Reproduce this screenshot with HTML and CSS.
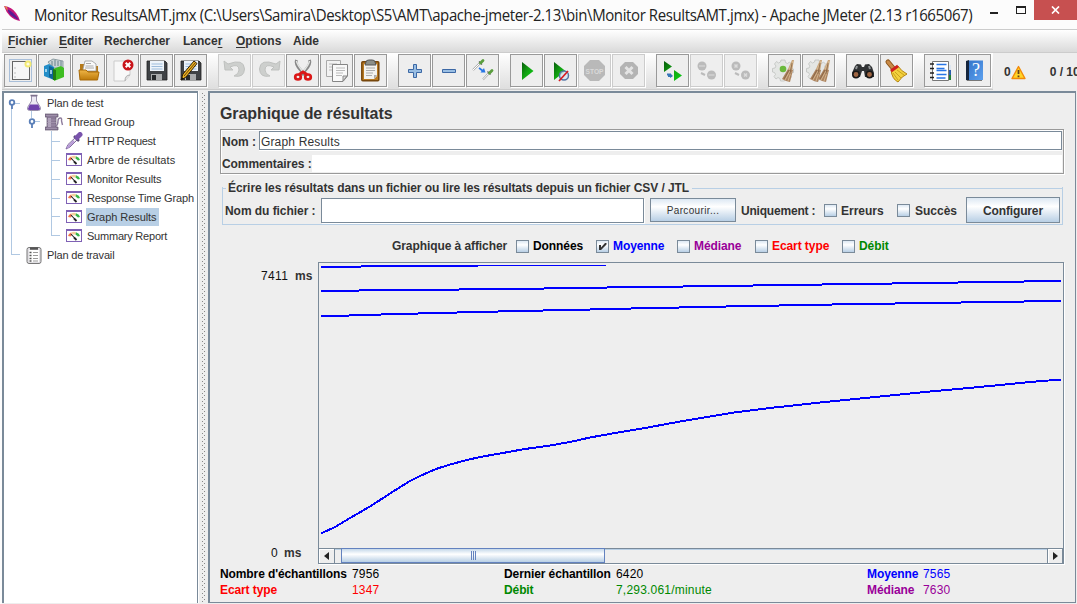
FILE: index.html
```html
<!DOCTYPE html>
<html lang="fr">
<head>
<meta charset="utf-8">
<title>Apache JMeter</title>
<link rel="stylesheet" href="styles.css">
</head>
<body>
<svg class="defs" width="0" height="0">
  <defs>
    <linearGradient id="play" x1="0" y1="0" x2="1" y2="1"><stop offset="0" stop-color="#075c0b"/><stop offset=".5" stop-color="#12a512"/><stop offset="1" stop-color="#0ad013"/></linearGradient>
    <linearGradient id="folder" x1="0" y1="0" x2="0" y2="1"><stop offset="0" stop-color="#efb546"/><stop offset="1" stop-color="#bd7a0a"/></linearGradient>
    <linearGradient id="blue" x1="0" y1="0" x2="1" y2="1"><stop offset="0" stop-color="#3675ca"/><stop offset="1" stop-color="#5ba0ee"/></linearGradient>
    <g id="gauge">
      <path d="M0 0H16V13H0Z M1 2V12H15V2Z" fill="#7f61b5" fill-rule="evenodd"/>
      <path d="M1 2H15V12H1Z" fill="#fff"/>
      <path d="M2 7 Q2.500 4.500 5 3.500 L6 6 L4.500 7.500Z" fill="#f3734c"/>
      <path d="M5 3.500 Q8 2.200 10 3.200 L9.500 5.500 H7Z" fill="#f5cf9a"/>
      <path d="M10 3.200 Q13.500 4.500 14 7 L12 7.500 L9.500 5.500Z" fill="#38b54a"/>
      <path d="M5 5 L10 10.500" stroke="#222" stroke-width="1.100"/><path d="M8 8.500L10.500 11" stroke="#222" stroke-width="1.800"/>
    </g>
    <g id="disk">
      <path d="M6 6 H24 L26 8 V25 H6Z" fill="#3f4245" stroke="#222" stroke-width=".8"/>
      <rect x="9" y="6" width="14" height="10" fill="#eef4fa"/>
      <path d="M10.5 9 H21.5 M10.5 11.5 H21.5 M10.5 14 H21.5" stroke="#9dbcdb"/>
      <rect x="10" y="19" width="11" height="6.5" fill="#a9abac"/><rect x="11" y="20" width="4" height="5" fill="#25282a"/>
    </g>
    <g id="gear">
      <path d="M10 5 h4 l.5 2.500 2 1 2-1.500 2.500 2.500-1.500 2 1 2 2 .5 v3.500 l-2.500.5-1 2 1.500 2-2.500 2.500-2-1.500-2 1-.5 2h-4l-.5-2.500-2-1-2 1.500-2-2.500 1.500-2-1-2-2-.5v-3.500l2.500-.5 1-2-1.500-2 2-2.500 2 1.500 2-1z" fill="#e4e6e4" stroke="#bfc1bf" stroke-width=".8"/>
    </g>
    <g id="brush"><path d="M10 0 L6 9 L10 11 L12 0Z" fill="#c9a57a"/><path d="M6 9 L0 19 L4 21 L8 22 L11 10Z" fill="#ad8460"/><path d="M8 11 L3 20 M9 12 L6 21 M11 1 L7 10" stroke="#dcbf98" stroke-width=".8"/><path d="M7 10 L2 19 M10 3L8 14" stroke="#7d5b3d" stroke-width=".7"/></g>
  </defs>
</svg>

<header class="titlebar">
  <svg class="feather" width="18" height="18" viewBox="0 0 18 18"><path d="M1 1 Q9 2 13 8 Q16 12 17 16 Q11 15 7 11 Q3 7 1 1Z" fill="#c5157b"/><path d="M4 4 Q11 7 16 15 Q9 12 6 8Z" fill="#5a1a94"/><path d="M1 1 L4 2 L5 6Z" fill="#e58c3c"/></svg>
  <div class="captionbox"><span class="caption">Monitor ResultsAMT.jmx (C:\Users\Samira\Desktop\S5\AMT\apache-jmeter-2.13\bin\Monitor ResultsAMT.jmx) - Apache JMeter (2.13 r1665067)</span></div>
  <span class="winbuttons">
    <svg width="44" height="20" viewBox="990 0 44 20" shape-rendering="crispEdges"><path d="M990 12 h8 v2 h-8z" fill="#222"/><path d="M1016 6 h10 v8 h-10z M1017 8 v5 h8 v-5z" fill="#222" fill-rule="evenodd"/></svg>
    <span class="close"><svg width="9" height="8" viewBox="0 0 9 8"><path d="M1 .5 L8 7.5 M8 .5 L1 7.5" stroke="#fff" stroke-width="1.7"/></svg></span>
  </span>
</header>

<div class="frame">
<nav class="menubar">
  <span class="m1"><u>F</u>ichier</span><span class="m2"><u>E</u>diter</span><span class="m3">Rechercher</span><span class="m4">Lance<u>r</u></span><span class="m5"><u>O</u>ptions</span><span class="m6">Aide</span>
</nav>

<div class="toolbar">
  <div class="tools">
    <div class="group">
      <button><svg viewBox="0 0 31 31"><rect x="4.5" y="4.5" width="22" height="22" fill="none" stroke="#a9bfd9"/><rect x="7.5" y="6.5" width="17" height="18" fill="#f7f7f7" stroke="#666"/><path d="M9.5 13h1M9.500 18h1M9.500 22h1" stroke="#888"/><circle cx="23" cy="9" r="3.500" fill="#f3ea72"/><circle cx="23" cy="9" r="1.600" fill="#fffce0"/></svg></button>
      <button><svg viewBox="0 0 31 31"><path d="M9 7 L14 4 L24 6 V13 L14 13Z" fill="#c9d3d5" stroke="#798c92" stroke-width=".8"/><path d="M13 6v5M16 5v6M19 6v5M22 6v5" stroke="#68828b"/><path d="M5 11 L10 9 L15 12 V25 L5 21Z" fill="#238ec8"/><path d="M10 11 L15 13 V25 L10 22Z" fill="#0f6498"/><path d="M14 14 L22 11 L25 13 V22 L15 26Z" fill="#3ebd21"/><path d="M14 14 L17 15 V25 L14 25Z" fill="#207b14"/><path d="M7 14v3M12 15v4" stroke="#c8eafb" stroke-width="1.5"/></svg></button>
      <button><svg viewBox="0 0 31 31"><path d="M7 13 V9 H12 L15 11 H25 V18 H7Z" fill="#b67a19"/><path d="M10 14 L12 6 H19 L23 9 V16 H10Z" fill="#fafafa" stroke="#999" stroke-width=".8"/><path d="M13 8.500h5M12.500 11h8M12 13h9" stroke="#aaa"/><path d="M6 15 H13 L15 17 H26 L24.500 25 H7Z" fill="url(#folder)" stroke="#a86b0b"/></svg></button>
      <button><svg viewBox="0 0 31 31"><path d="M7 6 H23 V20 L18 26 H7Z" fill="#f8f8f8" stroke="#ccc"/><path d="M23 20 Q18 20 18 26" fill="#e2e2e2" stroke="#aaa"/><circle cx="21" cy="10" r="5.500" fill="#c9141a"/><path d="M18.700 7.700l4.600 4.600m0-4.600l-4.600 4.600" stroke="#fff" stroke-width="2"/></svg></button>
      <button><svg viewBox="0 0 31 31"><use href="#disk"/></svg></button>
      <button><svg viewBox="0 0 31 31"><use href="#disk"/><path d="M6 25 L8 19 L19 6 L22 8.500 L11 22Z" fill="#ebb323" stroke="#312006"/><path d="M9 21 L20.500 7.500" stroke="#6e4308"/><path d="M6 25 L7 22 L9 24Z" fill="#111"/></svg></button>
    </div>
    <div class="group">
      <button class="off"><svg viewBox="0 0 31 31"><path d="M5 6 L6 15 H14 L11 12 Q20 8 20 15 Q20 19 15 21 Q25 23 25.500 14 Q25 3 9 9Z" fill="#cdcfcd" stroke="#bfc1bf"/></svg></button>
      <button class="off"><svg viewBox="0 0 31 31"><path d="M27 6 L26 15 H18 L21 12 Q12 8 12 15 Q12 19 17 21 Q7 23 6.500 14 Q7 3 23 9Z" fill="#cdcfcd" stroke="#bfc1bf"/></svg></button>
      <button><svg viewBox="0 0 31 31"><path d="M9.500 5 Q8 9 13.500 15 L18 20 M22.500 5 Q24 9 18.500 15 L14 20" fill="none" stroke="#888" stroke-width="3"/><path d="M9.500 6 Q10 10 17 18 M22.500 6 Q22 10 15 18" fill="none" stroke="#e3e5e3" stroke-width="1.500"/><ellipse cx="11" cy="22" rx="2.800" ry="2.500" fill="none" stroke="#db1717" stroke-width="2.700"/><ellipse cx="21" cy="22" rx="2.800" ry="2.500" fill="none" stroke="#db1717" stroke-width="2.700"/><path d="M12 19.500 L16 17 L20 19.500" stroke="#db1717" stroke-width="3" fill="none"/></svg></button>
      <button><svg viewBox="0 0 31 31"><path d="M5.500 5.500 H19.500 V21.500 H5.500Z" fill="#f2f2f2" stroke="#aaa"/><path d="M8 9h8M8 12h4M8 15h4" stroke="#bbb"/><path d="M11.500 9.500 H26.500 V21 L22 26.500 H11.500Z" fill="#f9f9f9" stroke="#858585"/><path d="M15 13h9M15 15.500h9M15 18h7M15 20.500h6" stroke="#bbb"/><path d="M26 21h-4v5z" fill="#ddd" stroke="#888"/></svg></button>
      <button><svg viewBox="0 0 31 31"><rect x="6.800" y="6.800" width="17" height="19" rx="1" fill="#b97a22" stroke="#76470d" stroke-width="1.500"/><path d="M9 9 H22 V21 L19 24 H9Z" fill="#f2f2ef"/><path d="M11 7 Q11 5 14 5 H17 Q20 5 20 7 L21 10 H10Z" fill="#8c8f89" stroke="#555"/><path d="M11 13h9M11 15.500h9M11 18h7M11 20.500h6" stroke="#aaa"/><path d="M22 20h-3v4z" fill="#aaa"/></svg></button>
    </div>
    <div class="group">
      <button><svg viewBox="0 0 31 31"><path d="M14.500 9.500h3v5h5v3h-5v5h-3v-5h-5v-3h5z" fill="#99bee3" stroke="#3c68a5"/></svg></button>
      <button><svg viewBox="0 0 31 31"><path d="M9.500 14.500h13v3h-13z" fill="#99bee3" stroke="#3c68a5"/></svg></button>
      <button><svg viewBox="0 0 31 31"><path d="M6 15 L13 8 M16 24.500 L22 18" stroke="#aaa" stroke-width="2"/><path d="M6 15 L13 8 M16 24.500 L22 18" stroke="#fff"/><path d="M12 6.500 L15 9.500 M20.500 16.500 L23.500 19.500" stroke="#555" stroke-width="1.200"/><path d="M13.500 8 L16 5.500 M22.500 18 L25 15.500" stroke="#5a9e3e" stroke-width="2.800" stroke-linecap="round"/><path d="M12 13 L16 16" stroke="#2976e5" stroke-width="1.600"/><path d="M18.500 17.500 L13.500 17.500 L17 13Z" fill="#2976e5"/></svg></button>
    </div>
    <div class="group">
      <button><svg viewBox="0 0 31 31"><path d="M11 7 L22.500 16 L11 25Z" fill="url(#play)"/></svg></button>
      <button><svg viewBox="0 0 31 31"><path d="M9 7 L20.500 16 L9 25Z" fill="url(#play)"/><circle cx="19" cy="20.500" r="4.500" fill="#d5e4f2" fill-opacity=".8" stroke="#5475a4" stroke-width="1.500"/><path d="M14 26 L23 16" stroke="#d61d21" stroke-width="1.700"/></svg></button>
      <button class="off"><svg viewBox="0 0 31 31"><path d="M11 5h9l6 6v9l-6 6h-9l-6-6v-9z" fill="#b9b9b9"/><text x="15.500" y="19" class="stoptext" textLength="18" lengthAdjust="spacingAndGlyphs">STOP</text></svg></button>
      <button class="off"><svg viewBox="0 0 31 31"><path d="M12 7h8l5 5v7l-5 5h-8l-5-5v-7z" fill="#b4b4b4"/><path d="M12.500 12l7 7m0-7l-7 7" stroke="#e4e4e4" stroke-width="3"/></svg></button>
    </div>
    <div class="group">
      <button><svg viewBox="0 0 31 31"><path d="M7 6 L15 11.500 L7 17Z M17 15 L25 20.500 L17 26Z" fill="url(#play)"/><path d="M10 19.500h2v1.500h3" stroke="#3776b8" stroke-width="2" fill="none"/><path d="M13 18l3 3-3 2z" fill="#3776b8"/></svg></button>
      <button class="off"><svg viewBox="0 0 31 31"><circle cx="11" cy="11" r="4.500" fill="#bbb"/><circle cx="20.500" cy="20" r="4.500" fill="#bbb"/><path d="M8 11h6M17.500 20h6" stroke="#ccc" stroke-width="2"/><path d="M10 18 L14 20" stroke="#bbb" stroke-width="2"/></svg></button>
      <button class="off"><svg viewBox="0 0 31 31"><circle cx="11" cy="11" r="4.500" fill="#bbb"/><circle cx="20.500" cy="20" r="4.500" fill="#bbb"/><path d="M9.500 9.500l3 3m0-3l-3 3M19 18.500l3 3m0-3l-3 3" stroke="#ddd" stroke-width="1.500"/><path d="M10 18 L14 20" stroke="#bbb" stroke-width="2"/></svg></button>
    </div>
    <div class="group">
      <button><svg viewBox="0 0 31 31"><use href="#gear" x="2"/><circle cx="14" cy="14" r="3.300" fill="#6ab93c"/><use href="#brush" x="13" y="5"/></svg></button>
      <button><svg viewBox="0 0 31 31"><use href="#gear" x="2"/><use href="#brush" x="7" y="5"/><use href="#brush" x="15" y="5"/></svg></button>
    </div>
    <div class="group">
      <button><svg viewBox="0 0 31 31"><path d="M8 11 L10 9 L14 9.500 L15 12 H17 L18 9.500 L22 9 L25 12 L27 18 V22 H18 L17 16 H15 L13 22 H6 L5 18Z" fill="#303234"/><path d="M10 11 L9 14 M22 11 L23 14" stroke="#909395" stroke-width="2"/><circle cx="9" cy="19.500" r="3.200" fill="#9e6542" stroke="#171717" stroke-width="1.500"/><circle cx="22.500" cy="19.500" r="3.200" fill="#9e6542" stroke="#171717" stroke-width="1.500"/></svg></button>
      <button><svg viewBox="0 0 31 31"><path d="M7 7 L12 13" stroke="#8e571c" stroke-width="5" stroke-linecap="round"/><path d="M7 7 L12 13" stroke="#c98b48" stroke-width="3" stroke-linecap="round"/><path d="M10 15 L17 11 Q20 16 26 19 Q21 21 17 27 Q11 24 10 15Z" fill="#f3d13d" stroke="#b4830b"/><path d="M16 15 L23 20 M14 17 L20 23 M12 18 L17 25" stroke="#c9a21f"/><path d="M10 16 L17 11" stroke="#d1201e" stroke-width="3"/></svg></button>
    </div>
    <div class="group">
      <button><svg viewBox="0 0 31 31"><path d="M7.500 6.500 H23.500 V25.500 H7.500Z" fill="#fff" stroke="#777"/><path d="M5 9h4M5 13.500h4M5 18h4M5 22.500h4" stroke="#222" stroke-width="1.500"/><path d="M11.500 9.500h10M11.500 13.500h8M11.500 15.500h10M11.500 19.500h10M11.500 23h9" stroke="#2876e6" stroke-width="1.300"/><path d="M25 10v5" stroke="#dce6f1" stroke-width="2"/><path d="M25 15v5" stroke="#2a5cad" stroke-width="2"/><path d="M25 20v5" stroke="#1f7f35" stroke-width="2"/></svg></button>
      <button><svg viewBox="0 0 31 31"><path d="M7 6 L10 5 V26 L7 25Z" fill="#16263e"/><path d="M10 5.500H24V25H10Z" fill="url(#blue)"/><path d="M8 25.500H23" stroke="#777" stroke-width="1"/><text x="17" y="21" class="help">?</text></svg></button>
    </div>
  </div>
  <div class="status">
    <span class="zero">0</span>
    <svg width="15" height="15" viewBox="0 0 15 15"><path d="M7.500 1.500 L14 13.500 H1Z" fill="#ffd426" stroke="#f28a09" stroke-width="1.400" stroke-linejoin="round"/><path d="M7.500 5v4M7.500 10.500v1.700" stroke="#65401c" stroke-width="1.800"/></svg>
    <span class="threads">0 / 10</span>
  </div>
</div>

<main class="split">
  <aside class="tree">
    <svg class="branches" width="60" height="165" viewBox="4 93 60 165" shape-rendering="crispEdges"><path d="M12 103.500H20M11.500 106V254.500H20M31.500 110V118M32 121.500H40M51.500 131V235.500H60M51 141.500H60M51 160.500H60M51 179.500H60M51 198.500H60M51 216.500H60" fill="none" stroke="#b0c8e2"/><g shape-rendering="auto" stroke="#5a7fb8" stroke-width="1.800" fill="#fff"><path d="M12 105V109M32 124V128"/><circle cx="12" cy="102.500" r="2.300"/><circle cx="32" cy="121.500" r="2.300"/></g></svg>
    <div class="node l0"><svg width="16" height="18" viewBox="0 0 16 18"><path d="M5.500 2V7L1.500 13.500Q1 16.500 3.500 16.500H12.500Q15 16.500 14.500 13.500L10.500 7V2Z" fill="#ece9f3" stroke="#9990ab"/><path d="M3.800 10.500H12.200L14 14.500Q14 16 12.500 16H3.500Q2 16 2 14.500Z" fill="#6f42ab"/><path d="M4.500 1.500H11.500" stroke="#7d718c" stroke-width="1.500"/></svg><span class="t1">Plan de test</span></div>
    <div class="node l1"><svg width="19" height="18" viewBox="0 0 19 18"><path d="M0 1h13v3h-2v10h2v3H0v-3h2V4H0z" fill="#8a7a97" stroke="#655971" stroke-width=".7"/><path d="M3 5v9h3V5z" fill="#b3a6be"/><path d="M2 7h9M2 9.500h9M2 12h9M1 2.500h11M1 15.500h11" stroke="#a799b2" stroke-width=".7"/><path d="M11 13 Q13 12 13 8 Q13 5 15.500 5 Q17 5 16.500 8 L17.500 12" fill="none" stroke="#8e7d9d" stroke-width="1.400"/></svg><span class="t2">Thread Group</span></div>
    <div class="node l2"><svg width="18" height="18" viewBox="0 0 18 18"><path d="M1 17 L3 12.500 L11 5 L13 7 L5 15Z" fill="#eee" stroke="#806a9e"/><path d="M2 16 L9 9" stroke="#b597d7" stroke-width="1.800"/><path d="M9 4 L14 9" stroke="#594b76" stroke-width="2.500"/><path d="M12 5.500 L15 2.500" stroke="#7953ac" stroke-width="5" stroke-linecap="round"/></svg><span class="t3">HTTP Request</span></div>
    <div class="node l2 g"><svg width="16" height="13"><use href="#gauge"/></svg><span class="t4">Arbre de résultats</span></div>
    <div class="node l2 g"><svg width="16" height="13"><use href="#gauge"/></svg><span class="t5">Monitor Results</span></div>
    <div class="node l2 g"><svg width="16" height="13"><use href="#gauge"/></svg><span class="t6">Response Time Graph</span></div>
    <div class="node l2 g"><svg width="16" height="13"><use href="#gauge"/></svg><span class="t7 selected">Graph Results</span></div>
    <div class="node l2 g"><svg width="16" height="13"><use href="#gauge"/></svg><span class="t8">Summary Report</span></div>
    <div class="node l0"><svg width="16" height="18" viewBox="0 0 16 18"><rect x="1" y="1.500" width="14" height="16" rx="2" fill="#e2e0e4" stroke="#777"/><rect x="3" y="4" width="10" height="12" fill="#fff"/><path d="M4 2.500h8" stroke="#555" stroke-width="2.500"/><path d="M3.500 6.500h2M3.500 9.500h2M3.500 12.500h2M3.500 15h2" stroke="#555" stroke-width="1.500"/><path d="M7 6.500h5M7 9.500h5M7 12.500h5M7 15h5" stroke="#9a9a9a"/></svg><span class="t9">Plan de travail</span></div>
  </aside>
  <div class="divider"><i></i><i></i></div>
  <section class="panel">
    <h1><span>Graphique de résultats</span></h1>
    <div class="namebox">
      <div class="namerow"><label>Nom :</label><div class="field"><span>Graph Results</span></div></div>
      <div class="comrow"><label>Commentaires :</label><div class="comfield"></div></div>
    </div>
    <div class="filebox">
      <div class="legend"><i class="stub"></i><span>Écrire les résultats dans un fichier ou lire les résultats depuis un fichier CSV / JTL</span><i class="rule"></i></div>
      <div class="filerow">
        <label class="fl">Nom du fichier :</label><div class="filefield"></div>
        <div class="btn browse"><span>Parcourir...</span></div>
        <label class="uniq">Uniquement :</label>
        <i class="cb"></i><label class="err">Erreurs</label>
        <i class="cb"></i><label class="suc">Succès</label>
        <div class="btn config"><span>Configurer</span></div>
      </div>
    </div>
    <div class="series">
      <label class="s0">Graphique à afficher</label>
      <i class="cb"></i><label class="s1">Données</label>
      <i class="cb"><svg width="11" height="11" viewBox="0 0 11 11"><path d="M2 4h2v2.500L8 2h1.500v1.500L4 9H2z" fill="#333"/></svg></i><label class="s2">Moyenne</label>
      <i class="cb"></i><label class="s3">Médiane</label>
      <i class="cb"></i><label class="s4">Ecart type</label>
      <i class="cb"></i><label class="s5">Débit</label>
    </div>
    <div class="graph">
      <div class="scale"><div><span class="num n1">7411</span><span class="ms">ms</span></div><div class="low"><span class="num n2">0</span><span class="ms">ms</span></div></div>
      <div class="plotbox">
        <svg class="plot" width="744" height="285" viewBox="319 263 744 285" shape-rendering="crispEdges" fill="none" stroke="#0000ff" stroke-width="2">
          <path d="M321 267H361M361 266H478"/><path d="M478 265.500H606" stroke-width="1"/>
          <path d="M321 291H359M359 290H459M459 289H544M544 288H607M607 287H683M683 286H753M753 285H822M822 284H892M892 283H958M958 282H1024M1024 281H1061"/>
          <path d="M321 316H349M349 315H381M381 314H418M418 313H457M457 312H498M498 311H543M543 310H590M590 309H631M631 308H679M679 307H726M726 306H779M779 305H832M832 304H895M895 303H961M961 302H1024M1024 301H1061"/>
          <polyline points="321,533.500 335,527 350,518 370,506.500 390,493.500 410,481 420,476 430,471.500 436,469 450,464.500 465,460.500 480,457 500,453.500 525,449 550,445.500 570,442 590,437.500 615,433 645,428 680,421.500 710,416.500 734,412.500 770,408 820,402.500 870,397.500 930,391.500 990,386 1030,382 1061,379.500"/>
        </svg>
        <div class="scroll">
          <div class="arrow"><svg width="5" height="8"><path d="M5 0v8L0 4z" fill="#222"/></svg></div>
          <div class="track"><div class="thumb"><i></i><i></i><i></i></div></div>
          <div class="arrow right"><svg width="5" height="8"><path d="M0 0v8l5-4z" fill="#222"/></svg></div>
        </div>
      </div>
    </div>
    <div class="stats">
      <b class="k1">Nombre d'échantillons</b><span>7956</span><b class="k2">Dernier échantillon</b><span>6420</span><b class="k3 blue">Moyenne</b><span class="blue">7565</span>
      <b class="k4 red">Ecart type</b><span class="red">1347</span><b class="k5 green">Débit</b><span class="green rate">7,293.061/minute</span><b class="k6 purple">Médiane</b><span class="purple">7630</span>
    </div>
  </section>
</main>
</div>
</body>
</html>
```
FILE: styles.css
```css
* { box-sizing: border-box; }
body { margin: 0; width: 1077px; height: 604px; overflow: hidden; background: #fcfcfc; color: #333; font: 12px/16px "Liberation Sans", Arial, sans-serif; }
svg { display: block; flex: none; }
.defs { position: absolute; }
label, b { font-weight: bold; }
label, span, b { white-space: nowrap; }
h1 { margin: 0; }

.titlebar { display: flex; height: 29px; padding-left: 3px; }
.feather { margin-top: 5px; }
.captionbox { margin-left: 13px; width: 956px; height: 29px; overflow: hidden; }
.caption { display: inline-block; font: 16px/30px "Open Sans", "Noto Sans", sans-serif; color: #222; letter-spacing: -.42px; transform: scaleX(.937); transform-origin: 0 0; }
.winbuttons { display: flex; }
.close { display: flex; align-items: center; justify-content: center; width: 43px; height: 20px; background: #c75050; }

.frame { margin-left: 2px; background: #eee; height: 575px; border-top: 1px solid #ccc; }
.menubar { display: flex; height: 23px; padding-left: 6px; line-height: 22px; font-weight: bold; background: linear-gradient(#fff, #dadada); border-bottom: 1px solid #ccc; }
.m1 { width: 51px; } .m2 { width: 45px; } .m3 { width: 79px; } .m4 { width: 53px; } .m5 { width: 57px; }
.menubar u { text-underline-offset: 2px; }

.toolbar { display: flex; height: 38px; }
.tools { display: flex; gap: 11px; width: 991px; height: 37px; padding: 1px 0 0 2px; background: linear-gradient(#fff, #dedede); border-bottom: 1px solid #ccc; }
.group { display: flex; gap: 1px; }
button { width: 33px; height: 33px; padding: 0; border: 1px solid #999; background: #eee; box-shadow: 1px 1px 0 #fff; }
button svg { width: 31px; height: 31px; }
button.off { border-color: #ccc; }
.stoptext { font: bold 8px "Liberation Sans", sans-serif; fill: #dadada; text-anchor: middle; }
.help { font: 18px "Liberation Serif", serif; fill: #fff; text-anchor: middle; }
.status { display: flex; align-items: center; padding: 0 0 0 11px; overflow: hidden; font-weight: bold; width: 84px; }
.zero { width: 10px; }
.threads { margin-left: 24px; }

.split { display: flex; height: 512px; }
.tree { position: relative; width: 196px; background: #fff; border: solid #7a8a99; border-width: 2px 1px 0 2px; font-size: 11px; }
.branches { position: absolute; left: 0; top: 0; }
.node { position: relative; display: flex; align-items: center; height: 19px; }
.l0 { padding-left: 22px; } .l1 { padding-left: 41px; } .l2 { padding-left: 61px; }
.node span { padding: 0 2px; height: 18px; line-height: 18px; margin-left: 3px; }
.node.l1 span { margin-left: 1px; }
.node.l2 span { margin-left: 2px; }
.node.l2.g { padding-left: 62px; }
.node.l2.g span { margin-left: 3px; }
.node.l2.g .selected { background: #b8cfe5; width: 73px; margin-left: 4px; padding-left: 1px; }
.t1, .t9 { letter-spacing: -.15px; } .t2 { letter-spacing: -.08px; } .t3 { letter-spacing: -.35px; } .t4 { letter-spacing: .08px; }
.t5 { letter-spacing: -.14px; } .t6 { letter-spacing: -.17px; } .t7 { letter-spacing: -.06px; } .t8 { letter-spacing: -.22px; }
.divider { display: flex; gap: 1px; width: 10px; padding: 2px 0 0 4px; background: linear-gradient(90deg, #fff 1px, #eee 1px); }
.divider i { width: 1px; background: repeating-linear-gradient(#888 0 1px, transparent 1px 4px); }
.divider i + i { margin-top: 2px; }

.panel { width: 868px; height: 512px; padding-left: 10px; border: 1px solid #7a8a99; border-width: 2px 1px 1px 2px; }
h1 { height: 36px; padding-top: 10px; font-size: 16px; line-height: 22px; letter-spacing: -.08px; }
.namebox { width: 844px; height: 45px; border: 1px solid #999; box-shadow: 1px 1px 0 #fff, inset 1px 1px 0 #fff; padding: 1px 1px 0; }
.namerow { display: flex; height: 20px; }
.namerow label { width: 37px; line-height: 22px; }
.field { width: 804px; height: 19px; border: 1px solid #7a8a99; background: #fff; line-height: 20px; padding-left: 1px; box-shadow: 0 1px 0 #fff; letter-spacing: .17px; }
.comrow { display: flex; height: 17px; margin-top: 4px; }
.comrow label { width: 90px; line-height: 19px; letter-spacing: -.08px; }
.comfield { width: 751px; background: #fff; }
.filebox { margin: 7px 0 0 2px; width: 841px; height: 44px; border: 1px solid #b8cfe5; border-top: 0; border-image: linear-gradient(transparent 7px, #b8cfe5 7px) 1; }
.legend { display: flex; height: 16px; align-items: flex-start; }
.legend span { margin: 0 2px; line-height: 15px; width: 462px; font-weight: bold; letter-spacing: -.075px; }
.stub { width: 3px; height: 1px; background: #b8cfe5; margin-top: 7px; }
.rule { flex: 1; height: 1px; background: #b8cfe5; margin-top: 7px; }
.filerow { display: flex; height: 26px; padding-left: 2px; align-items: center; }
.filerow label { line-height: 18px; padding-top: 1px; }
.fl { width: 96px; letter-spacing: -.05px; }
.filefield { width: 323px; height: 25px; border: 1px solid #7a8a99; background: #fff; box-shadow: 1px 1px 0 #fff; }
.btn { display: flex; align-items: center; justify-content: center; border: 1px solid #7a8a99; background: linear-gradient(#dde8f3, #fff 35%, #b8cfe5); }
.browse { margin-left: 6px; width: 86px; height: 24px; font-size: 10px; letter-spacing: .35px; line-height: 24px; padding-top: 2px; }
.uniq { margin-left: 5px; width: 83px; letter-spacing: -.2px; }
.cb { display: block; width: 13px; height: 13px; border: 1px solid #7a8a99; background: linear-gradient(#dde8f3, #fff 35%, #b8cfe5); }
.err { margin-left: 4px; width: 56px; }
.suc { margin-left: 5px; width: 51px; }
.config { width: 94px; height: 26px; font-weight: bold; letter-spacing: -.15px; padding-top: 1px; }
.series { display: flex; align-items: center; height: 16px; margin: 13px 0 0 172px; letter-spacing: -.08px; }
.s0 { width: 124px; } .s1, .s2, .s3, .s4, .s5 { margin-left: 4px; }
.s1 { width: 63px; color: #000; } .s2 { width: 64px; } .s3 { width: 61px; } .s4 { width: 70px; }
.s2, .blue { color: #00f; } .s3, .purple { color: #909; } .s4, .red { color: #f00; } .s5, .green { color: #080; }

.graph { display: flex; margin-top: 8px; height: 302px; }
.scale { display: flex; flex-direction: column; justify-content: space-between; width: 98px; padding: 6px 0 3px 41px; color: #111; }
.scale > div { display: flex; }
.scale .low { padding-left: 10px; }
.num { letter-spacing: .35px; }
.n1 { width: 34px; } .n2 { width: 13px; }
.ms { font-weight: bold; color: #333; }
.plotbox { width: 746px; height: 302px; border: 1px solid #7a8a99; box-shadow: 1px 1px 0 #fff; }
.scroll { display: flex; height: 15px; border-top: 1px solid #7a8a99; }
.arrow { display: flex; align-items: center; justify-content: center; width: 16px; border-right: 1px solid #7a8a99; box-shadow: inset 1px 1px 0 #fff; }
.arrow.right { border-left: 1px solid #7a8a99; border-right: 1px solid #7a8a99; }
.track { flex: 1; padding-left: 6px; box-shadow: inset 0 1px 0 #b8cfe5; }
.thumb { display: flex; justify-content: center; align-items: center; gap: 1px; width: 264px; height: 15px; margin-top: -1px; border: 1px solid #6382bf; background: linear-gradient(#c5d8ea, #fff 40%, #b8cfe5); }
.thumb i { width: 1px; height: 9px; background: #6382bf; }
.stats { display: grid; grid-template-columns: 132px 152px 112px 251px 56px 60px; color: #000; line-height: 16px; margin-top: 2px; }
.stats b { letter-spacing: -.1px; }
.stats span { letter-spacing: .2px; }
.stats .blue { color: #00f; } .stats .purple { color: #909; } .stats .red { color: #f00; } .stats .green { color: #080; }
```
